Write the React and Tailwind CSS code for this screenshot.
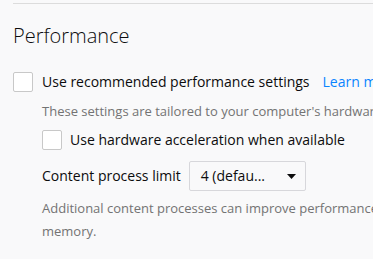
import React from "react";

function Checkbox() {
  return <span className="h-5 w-5 shrink-0 rounded-[2px] border border-[#c8c8c8] bg-white" />;
}

export default function App() {
  return (
    <div className="h-[259px] w-[373px] overflow-hidden bg-[#f9f9fa] font-['Segoe_UI','Open_Sans',sans-serif] text-[#0c0c0d]">
      <div className="ml-[13px] pt-[3px]">
        <div className="h-px w-[400px] bg-[#dcdcdc]" />
        <h1 className="mt-[18px] whitespace-nowrap text-[20px] font-light leading-[28px]">Performance</h1>

        <div className="mt-[22px] flex items-center gap-[9px] whitespace-nowrap leading-[20px]">
          <Checkbox />
          <span className="text-[14px]">Use recommended performance settings</span>
          <span className="ml-[4px] text-[14px] text-[#0a84ff]">Learn more</span>
        </div>
        <div className="ml-[29px]">
          <p className="mt-[9px] whitespace-nowrap text-[13px] leading-[20px] text-[#737373]">
            These settings are tailored to your computer's hardware and operating system.
          </p>
          <div className="mt-[9px] flex items-center gap-[8px] whitespace-nowrap leading-[20px]">
            <Checkbox />
            <span className="text-[14px]">Use hardware acceleration when available</span>
          </div>
          <div className="mt-[11px] flex items-center gap-[8px] whitespace-nowrap">
            <span className="text-[14px] leading-[20px]">Content process limit</span>
            <div className="flex h-[30px] w-[117px] items-center justify-between rounded-[2px] border border-[#d7d7db] bg-[#f9f9fa] pl-[11px] pr-[9px]">
              <span className="text-[14px] leading-[20px]">4 (defau...</span>
              <svg width="9" height="5" viewBox="0 0 9 5"><path d="M0 0h9L4.5 5z" fill="#0c0c0d" /></svg>
            </div>
          </div>
          <p className="mt-[6px] whitespace-nowrap text-[13px] leading-[23px] text-[#737373]">
            Additional content processes can improve performance when using multiple tabs, but will also use more
            <br />
            memory.
          </p>
        </div>
      </div>
    </div>
  );
}
